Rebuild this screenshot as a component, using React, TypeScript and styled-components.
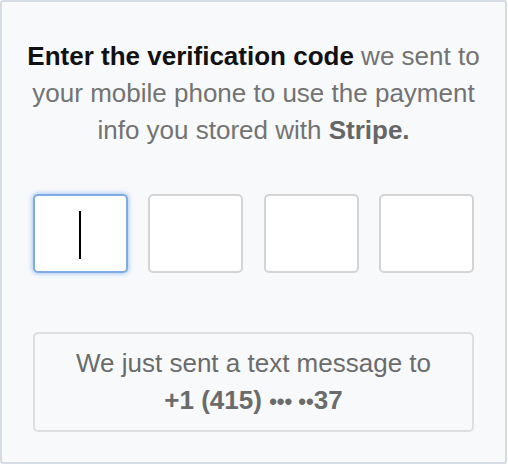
import styled, { createGlobalStyle } from "styled-components";

const GlobalStyle = createGlobalStyle`
  html, body {
    margin: 0;
    padding: 0;
    background: #ffffff;
  }
  body {
    font-family: "Liberation Sans", Arial, Helvetica, sans-serif;
  }
`;

const Card = styled.div`
  box-sizing: border-box;
  width: 507px;
  height: 464px;
  border: 2px solid #d6dce3;
  border-radius: 3px;
  background-color: #f7f9fb;
  padding: 36px 31px 0;
  display: flex;
  flex-direction: column;
  align-items: stretch;
`;

const Intro = styled.p`
  margin: 0 -16px;
  font-size: 26px;
  line-height: 37px;
  text-align: center;
  color: #737373;

  strong {
    font-weight: 700;
    color: #111111;
  }
  .brand {
    color: #666666;
  }
`;

const CodeRow = styled.div`
  display: grid;
  grid-template-columns: repeat(4, 95px);
  justify-content: space-between;
  margin-top: 45px;
`;

const CodeBox = styled.div<{ $active?: boolean }>`
  box-sizing: border-box;
  height: 79px;
  background: #ffffff;
  border-radius: 5px;
  border: 2px solid ${({ $active }) => ($active ? "#7eaae6" : "#d4d4d4")};
  box-shadow: ${({ $active }) =>
    $active ? "0 0 4px 1px rgba(110, 160, 230, 0.55)" : "none"};
  display: flex;
  align-items: center;
  justify-content: center;
`;

const Caret = styled.span`
  display: block;
  width: 2px;
  height: 48px;
  background: #000000;
  margin-top: 2px;
  margin-left: -2px;
`;

const Notice = styled.div`
  box-sizing: border-box;
  margin-top: 59px;
  height: 100px;
  border: 2px solid #dcdfe2;
  border-radius: 5px;
  padding: 11px 0;
  text-align: center;
  font-size: 26px;
  line-height: 37px;
  color: #6b6b6b;

  strong {
    font-weight: 700;
  }
`;

const Dots = styled.span`
  font-size: 22px;
`;

const App = () => {
  return (
    <>
      <GlobalStyle />
      <Card>
        <Intro>
          <strong>Enter the verification code</strong> we sent to
          <br />
          your mobile phone to use the payment
          <br />
          info you stored with <strong className="brand">Stripe.</strong>
        </Intro>
        <CodeRow>
          <CodeBox $active>
            <Caret />
          </CodeBox>
          <CodeBox />
          <CodeBox />
          <CodeBox />
        </CodeRow>
        <Notice>
          We just sent a text message to
          <br />
          <strong>
            +1 (415) <Dots>••• ••</Dots>37
          </strong>
        </Notice>
      </Card>
    </>
  );
};

export default App;
